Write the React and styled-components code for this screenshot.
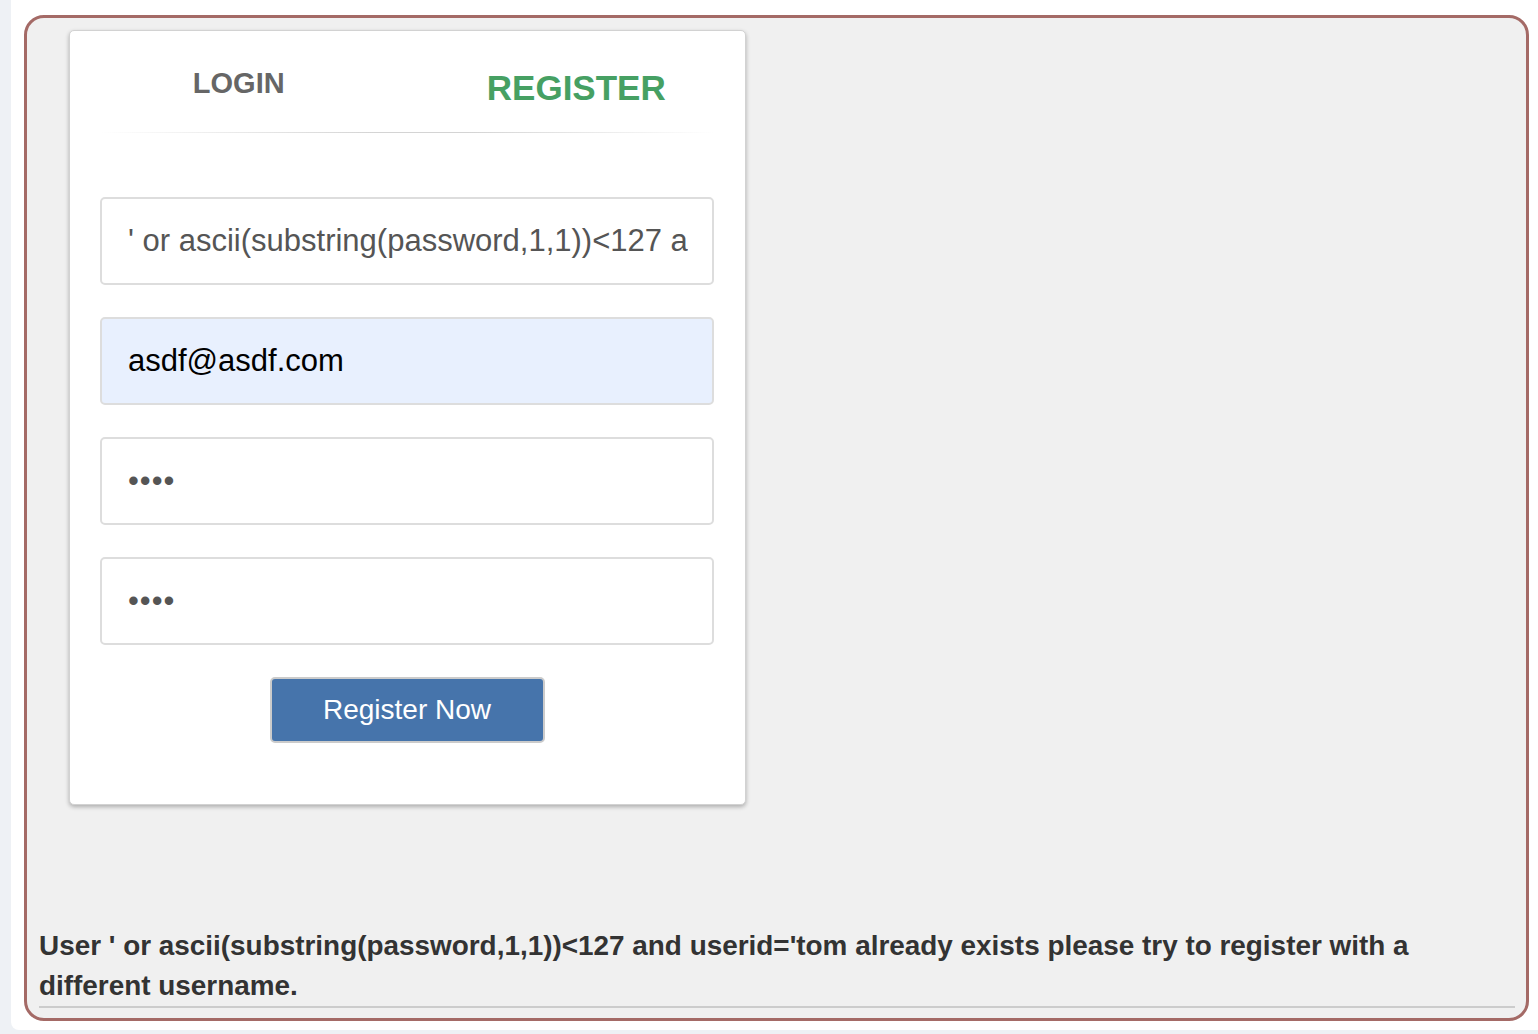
import React from "react";
import styled, { createGlobalStyle } from "styled-components";

const GlobalStyle = createGlobalStyle`
  html, body {
    margin: 0;
    padding: 0;
    background: #eef1f5;
    font-family: "Liberation Sans", Arial, Helvetica, sans-serif;
  }
`;

const Page = styled.div`
  margin-left: 11px;
  background: #ffffff;
  border-radius: 0 0 0 8px;
  padding: 15px 9px 9px 13px;
`;

const Lesson = styled.div`
  box-sizing: border-box;
  width: 1505px;
  height: 1006px;
  border: 3px solid #a46a66;
  border-radius: 20px;
  background: #f0f0f0;
  padding: 12px 11px 10px 12px;
  display: flex;
  flex-direction: column;
`;

const Card = styled.div`
  box-sizing: border-box;
  width: 677px;
  height: 775px;
  margin-left: 30px;
  background: #ffffff;
  border: 1px solid #d2d2d2;
  border-radius: 5px;
  box-shadow: 0 2px 4px rgba(0, 0, 0, 0.28);
  display: flex;
  flex-direction: column;
`;

const Tabs = styled.div`
  display: flex;
  align-items: flex-start;
  height: 101px;
  padding-top: 38px;
  box-sizing: border-box;
`;

const Tab = styled.div`
  flex: 1;
  text-align: center;
  font-weight: bold;
  line-height: 1;
  font-size: ${({ $active }) => ($active ? "35px" : "29px")};
  color: ${({ $active }) => ($active ? "#46a063" : "#666666")};
  margin-top: ${({ $active }) => ($active ? "1px" : "0")};
`;

const Divider = styled.div`
  height: 1px;
  margin: 0 30px;
  background: linear-gradient(to right, rgba(210, 210, 210, 0), #d4d4d4 45%, #d4d4d4 60%, rgba(210, 210, 210, 0));
`;

const Form = styled.form`
  display: flex;
  flex-direction: column;
  gap: 32px;
  padding: 64px 31px 0 30px;
  margin: 0;
`;

const Field = styled.input`
  box-sizing: border-box;
  width: 100%;
  height: 88px;
  padding: 0 24px 0 26px;
  border: 2px solid #dddddd;
  border-radius: 5px;
  outline: none;
  font-family: "Liberation Sans", Arial, Helvetica, sans-serif;
  font-size: 31px;
  color: ${({ $filled }) => ($filled ? "#000000" : "#555555")};
  background: ${({ $filled }) => ($filled ? "#e8f0fe" : "#ffffff")};
  letter-spacing: ${({ type }) => (type === "password" ? "1px" : "0")};
`;

const Submit = styled.button`
  align-self: center;
  box-sizing: border-box;
  width: 275px;
  height: 66px;
  background: #4674ab;
  color: #ffffff;
  border: 2px solid #cbcbcb;
  border-radius: 5px;
  font-family: "Liberation Sans", Arial, Helvetica, sans-serif;
  font-size: 28px;
  cursor: pointer;
`;

const Feedback = styled.div`
  margin-top: auto;
  font-weight: bold;
  font-size: 27.9px;
  line-height: 40px;
  color: #333333;
  border-bottom: 2px solid #cccccc;
`;

export default function App() {
  const injection = "' or ascii(substring(password,1,1))<127 and userid='tom";
  const message = `User ${injection} already exists please try to register with a different username.`;

  return (
    <>
      <GlobalStyle />
      <Page>
        <Lesson>
          <Card>
            <Tabs>
              <Tab>LOGIN</Tab>
              <Tab $active>REGISTER</Tab>
            </Tabs>
            <Divider />
            <Form onSubmit={(e) => e.preventDefault()}>
              <Field type="text" readOnly defaultValue={injection} />
              <Field type="email" readOnly $filled defaultValue="asdf@asdf.com" />
              <Field type="password" readOnly defaultValue="asdf" />
              <Field type="password" readOnly defaultValue="asdf" />
              <Submit type="submit">Register Now</Submit>
            </Form>
          </Card>
          <Feedback>{message}</Feedback>
        </Lesson>
      </Page>
    </>
  );
}
